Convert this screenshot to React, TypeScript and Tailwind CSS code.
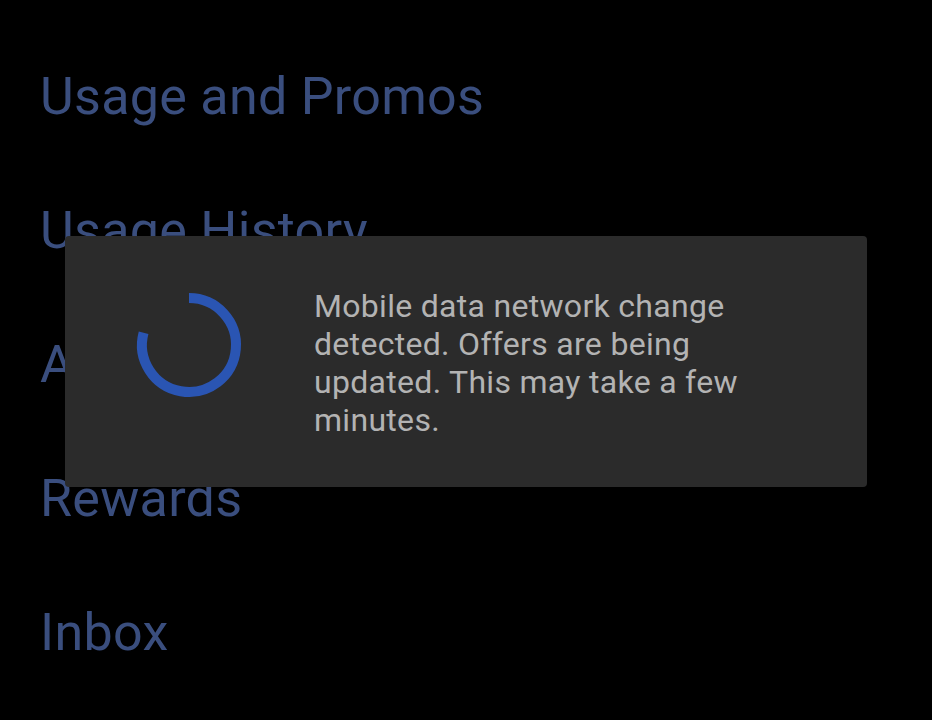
const items = ["Usage and Promos", "Usage History", "Account", "Rewards", "Inbox"];

function Spinner() {
  // ~285deg arc running clockwise from 12 o'clock, gap in the upper-left
  return (
    <svg width="120" height="120" viewBox="0 0 120 120" className="shrink-0">
      <path
        d="M60 13 A47 47 0 1 1 14.6 47.8"
        fill="none"
        stroke="#2a55b3"
        strokeWidth="10"
      />
    </svg>
  );
}

export default function App() {
  return (
    <div
      className="relative w-[932px] h-[720px] bg-black overflow-hidden"
      style={{ fontFamily: "Roboto, 'Noto Sans', sans-serif" }}
    >
      <ul className="flex flex-col pl-10 pt-[63px]">
        {items.map((label, i) => (
          <li
            key={i}
            className="h-[134px] text-[52px] leading-[68px] text-[#3a4e7e] tracking-[0.3px]"
          >
            {label}
          </li>
        ))}
      </ul>

      <div className="absolute left-[65px] top-[236px] w-[802px] h-[251px] rounded-[4px] bg-[#2b2b2b] flex items-start">
        <div className="ml-[64px] mt-[49px]">
          <Spinner />
        </div>
        <p className="ml-[65px] mt-[51px] w-[480px] text-[#b3b3b3] text-[32px] leading-[38px] tracking-[0.3px]">
          Mobile data network change detected. Offers are being updated. This may take a few minutes.
        </p>
      </div>
    </div>
  );
}
